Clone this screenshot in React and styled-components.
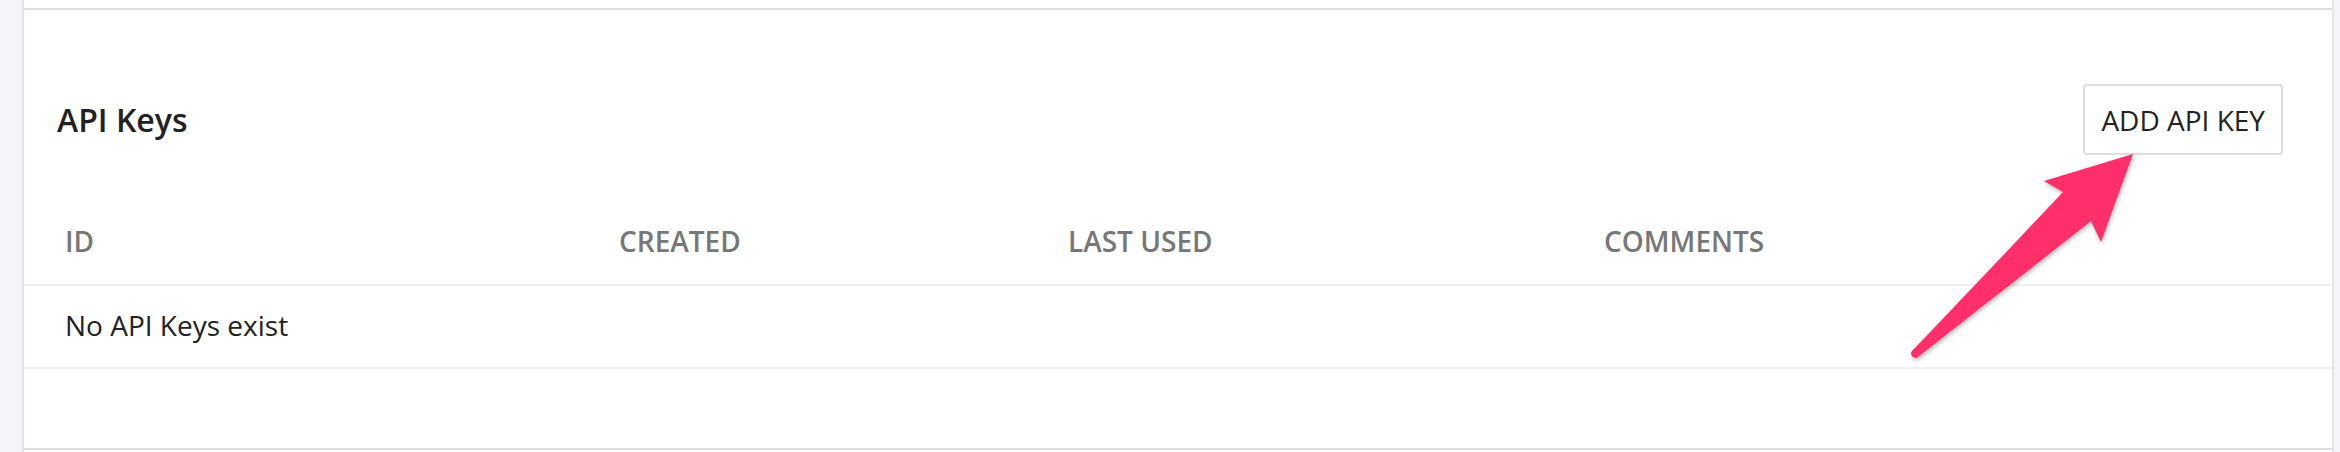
import React from "react";
import styled, { createGlobalStyle } from "styled-components";

const GlobalStyle = createGlobalStyle`
  body {
    margin: 0;
    background: #f4f5f9;
    font-family: "Open Sans", "Liberation Sans", sans-serif;
  }
`;

const Page = styled.div`
  height: 452px;
  padding: 0 6px 0 22px;
  overflow: hidden;
`;

const Stack = styled.div`
  border-left: 2px solid #e4e5ea;
  border-right: 2px solid #e4e5ea;
  background: #fff;
`;

const Stub = styled.div`
  height: ${(p) => p.h}px;
  background: #fff;
`;

const Card = styled.section`
  position: relative;
  background: #fff;
  border-top: 2px solid #e0e0e0;
  border-bottom: 2px solid #e0e0e0;
  padding-bottom: 79px;
`;

const TitleRow = styled.div`
  display: flex;
  align-items: center;
  justify-content: space-between;
  padding: 74px 49px 0 33px;
`;

const Title = styled.h2`
  margin: 0;
  font-size: 32px;
  font-weight: 600;
  color: #222;
`;

const Button = styled.button`
  height: 71px;
  padding: 0 16px;
  background: #fff;
  border: 2px solid #dedede;
  border-radius: 4px;
  font-family: inherit;
  font-size: 28px;
  color: #222;
  cursor: pointer;
`;

const Row = styled.div`
  display: grid;
  grid-template-columns: 554px 449px 536px 1fr;
  border-bottom: 2px solid #efefef;
`;

const HeadCell = styled.div`
  padding: 67px 0 24px 41px;
  font-size: 28px;
  font-weight: 600;
  color: #777;
  text-transform: uppercase;
`;

const Cell = styled.div`
  grid-column: ${(p) => p.span || "auto"};
  padding: 20px 0 23px 41px;
  font-size: 28px;
  color: #222;
`;

const Arrow = styled.svg`
  position: absolute;
  right: 172px;
  top: 130px;
  width: 260px;
  height: 230px;
  overflow: visible;
  filter: drop-shadow(1px 2px 2px rgba(0, 0, 0, 0.3));
  pointer-events: none;
`;

const columns = ["ID", "Created", "Last used", "Comments"];

export default function App() {
  return (
    <>
      <GlobalStyle />
      <Page>
        <Stack>
          <Stub h={8} />
          <Card>
            <TitleRow>
              <Title>API Keys</Title>
              <Button>ADD API KEY</Button>
            </TitleRow>
            <Row>
              {columns.map((c) => (
                <HeadCell key={c}>{c}</HeadCell>
              ))}
            </Row>
            <Row>
              <Cell span="1 / -1">No API Keys exist</Cell>
            </Row>
            <Arrow viewBox="0 0 260 230">
              <path
                d="M233 14 L144 41 L163 52 C112 106 62 159 12 211 A4.3 4.3 0 0 0 18 217 C80 168 138 123 191 81 L201 102 Z"
                fill="#fe2f6b"
              />
            </Arrow>
          </Card>
          <Stub h={2} />
        </Stack>
      </Page>
    </>
  );
}
